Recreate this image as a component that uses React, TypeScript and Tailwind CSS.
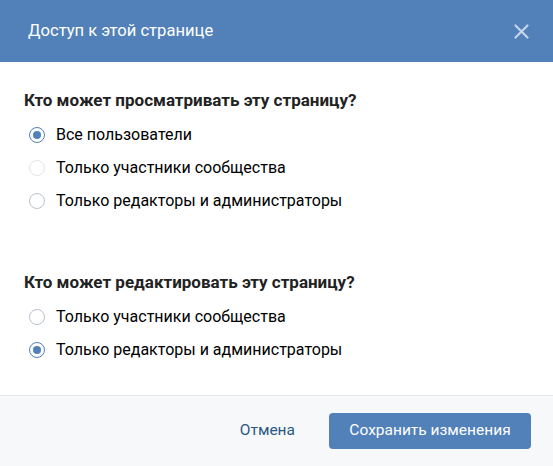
import React, { useState } from "react";

const viewOptions = [
    { id: "all", label: "Все пользователи", faded: false },
    { id: "members", label: "Только участники сообщества", faded: true },
    { id: "editors", label: "Только редакторы и администраторы", faded: false },
];

const editOptions = [
    { id: "members", label: "Только участники сообщества", faded: false },
    { id: "editors", label: "Только редакторы и администраторы", faded: false },
];

function Radio({ checked, faded, label, onClick }: { checked: boolean; faded: boolean; label: string; onClick: () => void }) {
    return (
        <div className="flex items-center h-[33px] cursor-pointer" onClick={onClick}>
            <span
                className={
                    checked
                        ? "flex items-center justify-center w-[16px] h-[16px] rounded-full border border-[#5181b8] ml-[5px]"
                        : faded
                        ? "flex items-center justify-center w-[16px] h-[16px] rounded-full border border-[#e1e5ea] ml-[5px]"
                        : "flex items-center justify-center w-[16px] h-[16px] rounded-full border border-[#b9c2cc] ml-[5px]"
                }
            >
                {checked && <span className="w-[8px] h-[8px] rounded-full bg-[#5181b8]" />}
            </span>
            <span className="ml-[11px] text-[16px] text-[#000]">{label}</span>
        </div>
    );
}

export default function App() {
    const [view, setView] = useState("all");
    const [edit, setEdit] = useState("editors");

    return (
        <div className="w-[553px] h-[466px] flex flex-col bg-white" style={{ fontFamily: "Roboto, 'Noto Sans', sans-serif" }}>
            <div className="h-[62px] shrink-0 bg-[#5181b8] flex items-center justify-between pl-[28px] pr-[24px]">
                <span className="text-[16.6px] text-white">Доступ к этой странице</span>
                <svg width="15" height="15" viewBox="0 0 15 15" className="text-[#c4d4e9]">
                    <path d="M1.5 1.5 L13.5 13.5 M13.5 1.5 L1.5 13.5" stroke="currentColor" strokeWidth="2.2" strokeLinecap="round" />
                </svg>
            </div>

            <div className="flex-1 pt-[28px] px-[24px]">
                <div className="h-5 leading-5 text-[17px] font-bold text-[#222]">Кто может просматривать эту страницу?</div>
                <div className="mt-[8px]">
                    {viewOptions.map((o) => (
                        <Radio key={o.id} checked={view === o.id} faded={o.faded} label={o.label} onClick={() => setView(o.id)} />
                    ))}
                </div>

                <div className="mt-[55px] h-5 leading-5 text-[17px] font-bold text-[#222]">Кто может редактировать эту страницу?</div>
                <div className="mt-[8px]">
                    {editOptions.map((o) => (
                        <Radio key={o.id} checked={edit === o.id} faded={o.faded} label={o.label} onClick={() => setEdit(o.id)} />
                    ))}
                </div>
            </div>

            <div className="h-[71px] shrink-0 border-t border-[#e7e8ec] bg-[#f7f8fa] flex items-center justify-end pr-[22px]">
                <button className="text-[15.5px] text-[#2a5885] mr-[34px]">Отмена</button>
                <button className="w-[202px] h-[36px] rounded-[4px] bg-[#5181b8] text-white text-[15.5px]">Сохранить изменения</button>
            </div>
        </div>
    );
}
